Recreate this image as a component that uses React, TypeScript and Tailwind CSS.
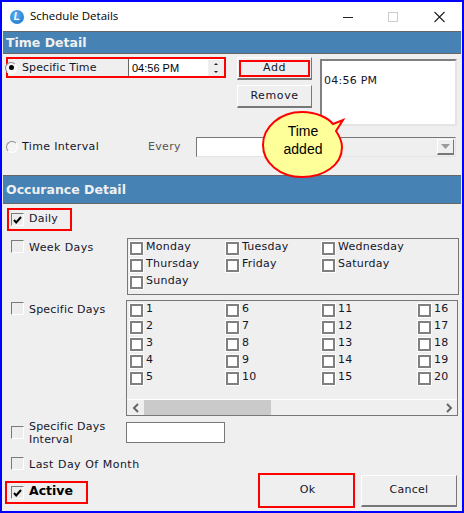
const Radio = ({ on }: { on?: boolean }) => (
  <span className="flex h-[12px] w-[12px] shrink-0 items-center justify-center rounded-full border border-[#8a8a8a] border-r-white border-b-white bg-[#f4f4f4]">
    {on && <span className="h-[5px] w-[5px] rounded-full bg-black" />}
  </span>
)

const Check = ({ on }: { on?: boolean }) => (
  <span className="flex h-[13px] w-[13px] shrink-0 items-center justify-center border border-[#7a7a7a] border-r-white border-b-white bg-[#ededed]">
    {on && (
      <svg width="9" height="8" viewBox="0 0 9 8">
        <path d="M1 4 L3.2 6.4 L8 1" fill="none" stroke="#000" strokeWidth="2" />
      </svg>
    )}
  </span>
)

const BoxCheck = ({ label }: { label: string }) => (
  <div className="flex h-[17px] items-center gap-[3px] whitespace-nowrap">
    <span className="h-[13px] w-[13px] shrink-0 border-2 border-[#808080] bg-white outline outline-1 outline-white" />
    <span className="-mt-[2px]">{label}</span>
  </div>
)

const Header = ({ title, h }: { title: string; h: string }) => (
  <div className={`${h} ml-px mr-[1px] flex items-center border-y border-y-[#666] bg-[#4682b4] pl-[3px] pt-[2px] text-[12.5px] font-bold tracking-normal text-[#f0f0f0]`}>
    {title}
  </div>
)

const Raised = ({ className, children }: { className: string; children: React.ReactNode }) => (
  <div className={`${className} flex items-center justify-center border border-white border-r-[#777] border-b-2 border-b-[#777] bg-[#efefef]`}>
    {children}
  </div>
)

export default function App() {
  const weekDays = ["Monday", "Tuesday", "Wednesday", "Thursday", "Friday", "Saturday", "Sunday"]
  const days = [1, 6, 11, 16, 2, 7, 12, 17, 3, 8, 13, 18, 4, 9, 14, 19, 5, 10, 15, 20]

  return (
    <div className="relative flex h-[513px] w-[464px] flex-col overflow-hidden border-2 border-[#0000ff] bg-[#efefef] font-['DejaVu_Sans',sans-serif] text-[11px] tracking-[0.25px] text-[#15152a]">
      {/* title bar */}
      <div className="flex h-[29px] shrink-0 items-center bg-white pl-[8px]">
        <span className="flex h-[14px] w-[14px] items-center justify-center rounded-full bg-[radial-gradient(circle_at_40%_35%,#5fb2f2,#0f6fc6)] font-['Liberation_Sans',sans-serif] text-[10px] font-bold italic text-white">
          L
        </span>
        <span className="-mt-px ml-[6px] font-['Open_Sans',sans-serif] text-[11.5px] tracking-normal text-black">Schedule Details</span>
        <svg className="ml-auto mr-[14px]" width="105" height="14" viewBox="0 0 105 14">
          <path d="M0 7.5H10" stroke="#222" strokeWidth="1" />
          <rect x="45.5" y="2.5" width="9" height="9" fill="none" stroke="#ccc" />
          <path d="M91.5 2 L101.5 12 M101.5 2 L91.5 12" stroke="#222" strokeWidth="1.1" />
        </svg>
      </div>

      <Header title="Time Detail" h="h-[23px]" />

      {/* time detail */}
      <div className="flex h-[83px] shrink-0 pt-[3px]">
        <div className="ml-[4px] flex h-[21px] w-[220px] items-center border-2 border-[#ff0000]">
          <span className="-ml-[3px]">
            <Radio on />
          </span>
          <span className="ml-[5px] w-[106px] pt-[2px] tracking-[0.1px]">Specific Time</span>
          <div className="flex h-full flex-1 items-center border-l border-l-[#666] bg-white pl-[3px] pt-px font-['Liberation_Sans',sans-serif] text-[11px] tracking-normal text-black">
            04:56 PM
            <div className="ml-auto flex h-full w-[16px] flex-col justify-center gap-[2px] bg-[#eee] text-[#222]">
              <svg width="16" height="7" viewBox="0 0 16 7"><path d="M6 5h4L8 3z" fill="#222" /></svg>
              <svg width="16" height="7" viewBox="0 0 16 7"><path d="M6 2h4L8 4z" fill="#222" /></svg>
            </div>
          </div>
        </div>
        <div className="ml-[11px] w-[75px]">
          <Raised className="h-[23px] w-full">
            <span className="flex h-[17px] w-[71px] items-center justify-center border-2 border-[#ff0000] pt-px tracking-[0.5px]">Add</span>
          </Raised>
          <Raised className="mt-[5px] h-[23px] w-full pt-px">
            <span className="tracking-[0.6px]">Remove</span>
          </Raised>
        </div>
        <div className="ml-[8px] mt-[2px] flex h-[67px] w-[137px] items-center border-2 border-[#808080] border-r-[#e4e4e4] border-b-[#e4e4e4] bg-white pb-[22px] pl-[2px]">
          04:56 PM
        </div>
      </div>

      {/* time interval */}
      <div className="flex h-[20px] shrink-0 items-center">
        <span className="ml-[4px]">
          <Radio />
        </span>
        <span className="ml-[4px] w-[126px] pt-px tracking-[0.35px]">Time Interval</span>
        <span className="w-[48px] tracking-[0.3px] text-[#555]">Every</span>
        <div className="flex h-[20px] w-[260px] items-center border border-[#777] border-r-[#e4e4e4] border-b-[#e4e4e4]">
          <span className="h-full w-[90px] bg-white" />
          <Raised className="ml-auto mr-px h-[16px] w-[17px]">
            <svg width="9" height="5" viewBox="0 0 9 5"><path d="M0 0h9L4.5 5z" fill="#9a9a9a" /></svg>
          </Raised>
        </div>
      </div>

      <div className="mt-[18px]">
        <Header title="Occurance Detail" h="h-[29px]" />
      </div>

      {/* occurance detail */}
      <div className="ml-[5px] mt-[4px] flex h-[23px] w-[65px] items-center border-2 border-[#ff0000] pl-[2px]">
        <Check on />
        <span className="ml-[5px]">Daily</span>
      </div>

      <div className="mt-[7px] flex">
        <div className="flex w-[125px] items-start pl-[9px] pt-[2px]">
          <Check />
          <span className="ml-[5px] tracking-[0.4px]">Week Days</span>
        </div>
        <div className="grid h-[57px] w-[332px] grid-cols-[96px_96px_1fr] content-start border border-[#777] pl-[2px] pt-[1px]">
          {weekDays.map((d) => (
            <BoxCheck key={d} label={d} />
          ))}
        </div>
      </div>

      <div className="mt-[5px] flex">
        <div className="flex w-[124px] items-start pl-[9px] pt-[2px]">
          <Check />
          <span className="ml-[5px] tracking-[0.2px]">Specific Days</span>
        </div>
        <div className="flex h-[116px] w-[332px] flex-col border border-[#777]">
          <div className="grid flex-1 grid-cols-[96px_96px_96px_1fr] content-start pl-[3px] pt-[1px]">
            {days.map((d) => (
              <BoxCheck key={d} label={String(d)} />
            ))}
          </div>
          <div className="flex h-[16px] items-center border-t border-t-white">
            <svg className="ml-[4px] mr-[3px]" width="10" height="10" viewBox="0 0 10 10">
              <path d="M7 1 L3 5 L7 9" fill="none" stroke="#666" strokeWidth="2" />
            </svg>
            <span className="h-full w-[127px] bg-[#cacaca]" />
            <svg className="ml-auto mr-[3px]" width="10" height="10" viewBox="0 0 10 10">
              <path d="M3 1 L7 5 L3 9" fill="none" stroke="#666" strokeWidth="2" />
            </svg>
          </div>
        </div>
      </div>

      <div className="mt-[6px] flex h-[21px] items-center">
        <div className="flex w-[124px] items-center pl-[9px]">
          <Check />
          <span className="ml-[5px] leading-[13px] tracking-[0.2px]">
            Specific Days
            <br />
            Interval
          </span>
        </div>
        <div className="h-[21px] w-[99px] border border-[#777] bg-white" />
      </div>

      <div className="mt-[14px] flex h-[13px] items-center pl-[9px]">
        <Check />
        <span className="ml-[5px] pt-[3px] tracking-[0.5px]">Last Day Of Month</span>
      </div>

      <div className="mt-[3px] flex items-start">
        <div className="ml-[3px] mt-[8px] flex h-[23px] w-[83px] items-center border-2 border-[#ff0000] pl-[4px] text-[12.5px] font-bold tracking-normal text-black">
          <Check on />
          <span className="-mt-[2px] ml-[5px]">Active</span>
        </div>
        <div className="ml-[170px] flex h-[35px] w-[97px] items-center justify-center border-2 border-[#ff0000] pl-[2px]">Ok</div>
        <Raised className="ml-[6px] mt-[2px] h-[32px] w-[96px]">Cancel</Raised>
      </div>

      {/* balloon note */}
      <div className="absolute left-[258px] top-[107px] h-[71px] w-[88px] font-['Liberation_Sans',sans-serif] text-[14px] leading-[18px] tracking-normal text-black">
        <svg className="absolute inset-0" width="88" height="71" viewBox="0 0 88 71">
          <path
            d="M42 3 C57 3 68 9 73 15 L83 11 L76 22 C80 28 82 33 82 38 C82 56 64 68 42 68 C20 68 3 54 3 36 C3 18 20 3 42 3 Z"
            fill="#ffff99"
            stroke="#ff0000"
            strokeWidth="2"
          />
        </svg>
        <div className="absolute left-[3px] top-[13px] w-[80px] text-center">
          Time
          <br />
          added
        </div>
      </div>
    </div>
  )
}
